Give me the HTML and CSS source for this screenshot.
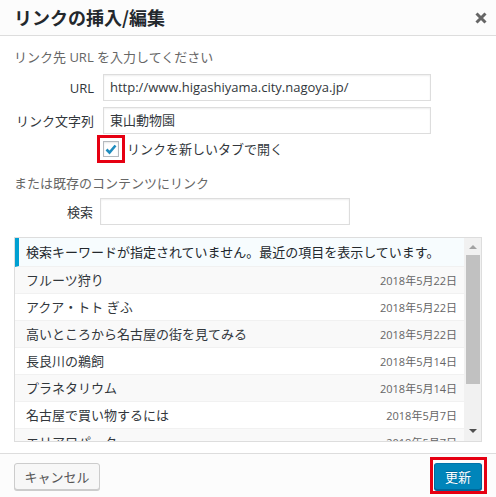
FILE: index.html
```html
<!DOCTYPE html>
<html lang="ja">
<head>
<meta charset="utf-8">
<title>リンクの挿入/編集</title>
<link rel="stylesheet" href="styles.css">
</head>
<body>
<div class="dialog">
  <header class="hd">
    <h1 class="title">リンクの挿入/編集</h1>
    <span class="close"><svg width="12" height="12" viewBox="0 0 12 12"><path d="M1.5 1.5 L10.5 10.5 M10.5 1.5 L1.5 10.5" stroke="#666" stroke-width="3" stroke-linecap="butt"/></svg></span>
  </header>
  <div class="bd">
    <p class="howto">リンク先 URL を入力してください</p>
    <div class="field">
      <label class="lbl">URL</label>
      <div class="inp">http://www.higashiyama.city.nagoya.jp/</div>
    </div>
    <div class="field f2">
      <label class="lbl">リンク文字列</label>
      <div class="inp">東山動物園</div>
    </div>
    <div class="chkrow">
      <span class="hl"><span class="cb"><svg width="14" height="14" viewBox="0 0 14 14"><path d="M2.5 7.5 L5.5 10.5 L11.5 3.5" fill="none" stroke="#1e8cbe" stroke-width="2.6"/></svg></span></span>
      <span class="chktxt">リンクを新しいタブで開く</span>
    </div>
    <p class="howto h2">または既存のコンテンツにリンク</p>
    <div class="field search">
      <label class="lbl">検索</label>
      <div class="inp"></div>
    </div>
    <div class="results">
      <div class="rows">
        <div class="notice">検索キーワードが指定されていません。最近の項目を表示しています。</div>
        <div class="row alt"><span class="t">フルーツ狩り</span><span class="d">2018年5月22日</span></div>
        <div class="row"><span class="t">アクア・トト ぎふ</span><span class="d">2018年5月22日</span></div>
        <div class="row alt"><span class="t">高いところから名古屋の街を見てみる</span><span class="d">2018年5月22日</span></div>
        <div class="row"><span class="t">長良川の鵜飼</span><span class="d">2018年5月14日</span></div>
        <div class="row alt"><span class="t">プラネタリウム</span><span class="d">2018年5月14日</span></div>
        <div class="row"><span class="t">名古屋で買い物するには</span><span class="d">2018年5月7日</span></div>
        <div class="row alt"><span class="t">エリアロパーク</span><span class="d">2018年5月7日</span></div>
      </div>
      <div class="sbar">
        <span class="arr up"></span>
        <span class="thumb"></span>
        <span class="sp"></span>
        <span class="arr dn"></span>
      </div>
    </div>
  </div>
  <footer class="ft">
    <button class="btn cancel">キャンセル</button>
    <span class="hl2"><button class="btn primary">更新</button></span>
  </footer>
</div>
</body>
</html>
```

FILE: styles.css
```css
* { box-sizing: border-box; }
html, body { margin: 0; padding: 0; background: #fff; }
body {
  font-family: "Open Sans", "Noto Sans CJK JP", sans-serif;
  font-size: 13px;
  color: #32373c;
}
.dialog {
  width: 496px;
  height: 497px;
  display: flex;
  flex-direction: column;
  background: #fff;
}
.hd {
  height: 36px;
  background: #fcfcfc;
  border-bottom: 1px solid #dddddd;
  display: flex;
  align-items: center;
  justify-content: space-between;
  padding: 0 9px 0 14px;
}
.title {
  margin: 0;
  font-size: 18px;
  font-weight: 700;
  color: #23282d;
  line-height: 35px;
  font-family: "Noto Sans CJK JP", sans-serif;
}
.close { display: flex; width: 12px; height: 12px; }
.bd {
  padding: 11px 14px 0 14px;
  height: 417px;
}
.howto {
  margin: 0;
  line-height: 20px;
  color: #666;
}
.field {
  display: flex;
  align-items: center;
  margin-top: 7px;
}
.field.f2 { margin-top: 6px; }
.lbl {
  width: 80px;
  margin-right: 9px;
  text-align: right;
  color: #32373c;
}
.inp {
  width: 328px;
  height: 27px;
  border: 1px solid #dddddd;
  box-shadow: inset 0 1px 2px rgba(0,0,0,.07);
  padding: 0 6px;
  line-height: 25px;
  color: #32373c;
  white-space: nowrap;
  overflow: hidden;
}
.chkrow {
  display: flex;
  align-items: center;
  margin-top: 1px;
  padding-left: 83px;
}
.hl {
  width: 28px;
  height: 28px;
  border: 3px solid #e60012;
  padding: 3px;
  display: flex;
}
.cb {
  width: 16px;
  height: 16px;
  border: 1px solid #b4b9be;
  background: #fff;
  box-shadow: inset 0 1px 2px rgba(0,0,0,.1);
  display: flex;
  align-items: center;
  justify-content: center;
}
.chktxt { margin-left: 2px; line-height: 20px; }
.howto.h2 { margin-top: 10px; }
.field.search { margin-top: 5px; }
.field.search .lbl { width: 79px; margin-right: 7px; }
.field.search .inp { width: 250px; }
.results {
  margin-top: 12px;
  height: 205px;
  border: 1px solid #dddddd;
  display: flex;
  overflow: hidden;
}
.rows {
  flex: 1;
  overflow: hidden;
}
.notice {
  height: 29px;
  background: #f7fcfe;
  border-left: 4px solid #00a0d2;
  border-bottom: 1px solid #f1f1f1;
  padding-left: 7px;
  line-height: 28px;
  color: #23282d;
  white-space: nowrap;
}
.row {
  height: 27px;
  border-bottom: 1px solid #f1f1f1;
  display: flex;
  align-items: center;
  justify-content: space-between;
  padding: 0 7px 0 11px;
  background: #fff;
}
.row.alt { background: #f9f9f9; }
.t { line-height: 26px; color: #32373c; }
.d { font-size: 11px; color: #666; line-height: 26px; padding-top: 2px; }
.sbar {
  width: 17px;
  background: #f1f1f1;
  display: flex;
  flex-direction: column;
  align-items: center;
}
.arr {
  width: 0; height: 0;
  border-left: 4px solid transparent;
  border-right: 4px solid transparent;
  margin: 6px 0;
}
.arr.up { border-bottom: 4px solid #a3a3a3; margin-top: 7px; }
.arr.dn { border-top: 4px solid #505050; margin-bottom: 8px; }
.thumb {
  width: 14px;
  height: 129px;
  background: #c1c1c1;
}
.sp { flex: 1; }
.ft {
  flex: 1;
  background: #fcfcfc;
  border-top: 1px solid #dddddd;
  display: flex;
  justify-content: space-between;
  align-items: flex-start;
  padding: 9px 9px 0 14px;
}
.btn {
  font-family: "Noto Sans CJK JP", sans-serif;
  font-size: 13px;
  height: 27px;
  border-radius: 3px;
  padding: 0;
  line-height: 25px;
  text-align: center;
  white-space: nowrap;
  cursor: pointer;
}
.cancel {
  width: 86px;
  background: #f7f7f7;
  border: 1px solid #cccccc;
  box-shadow: 0 1px 0 #cccccc;
  color: #555;
}
.hl2 {
  display: flex;
  border: 3px solid #e60012;
  padding: 3px 2px 1px 1px;
  margin-top: -6px;
}
.primary {
  width: 48px;
  background: #0085ba;
  border: 1px solid #006799;
  border-top-color: #0073aa;
  box-shadow: 0 1px 0 #006799;
  color: #fff;
  text-shadow: 0 -1px 1px #006799;
}
```
